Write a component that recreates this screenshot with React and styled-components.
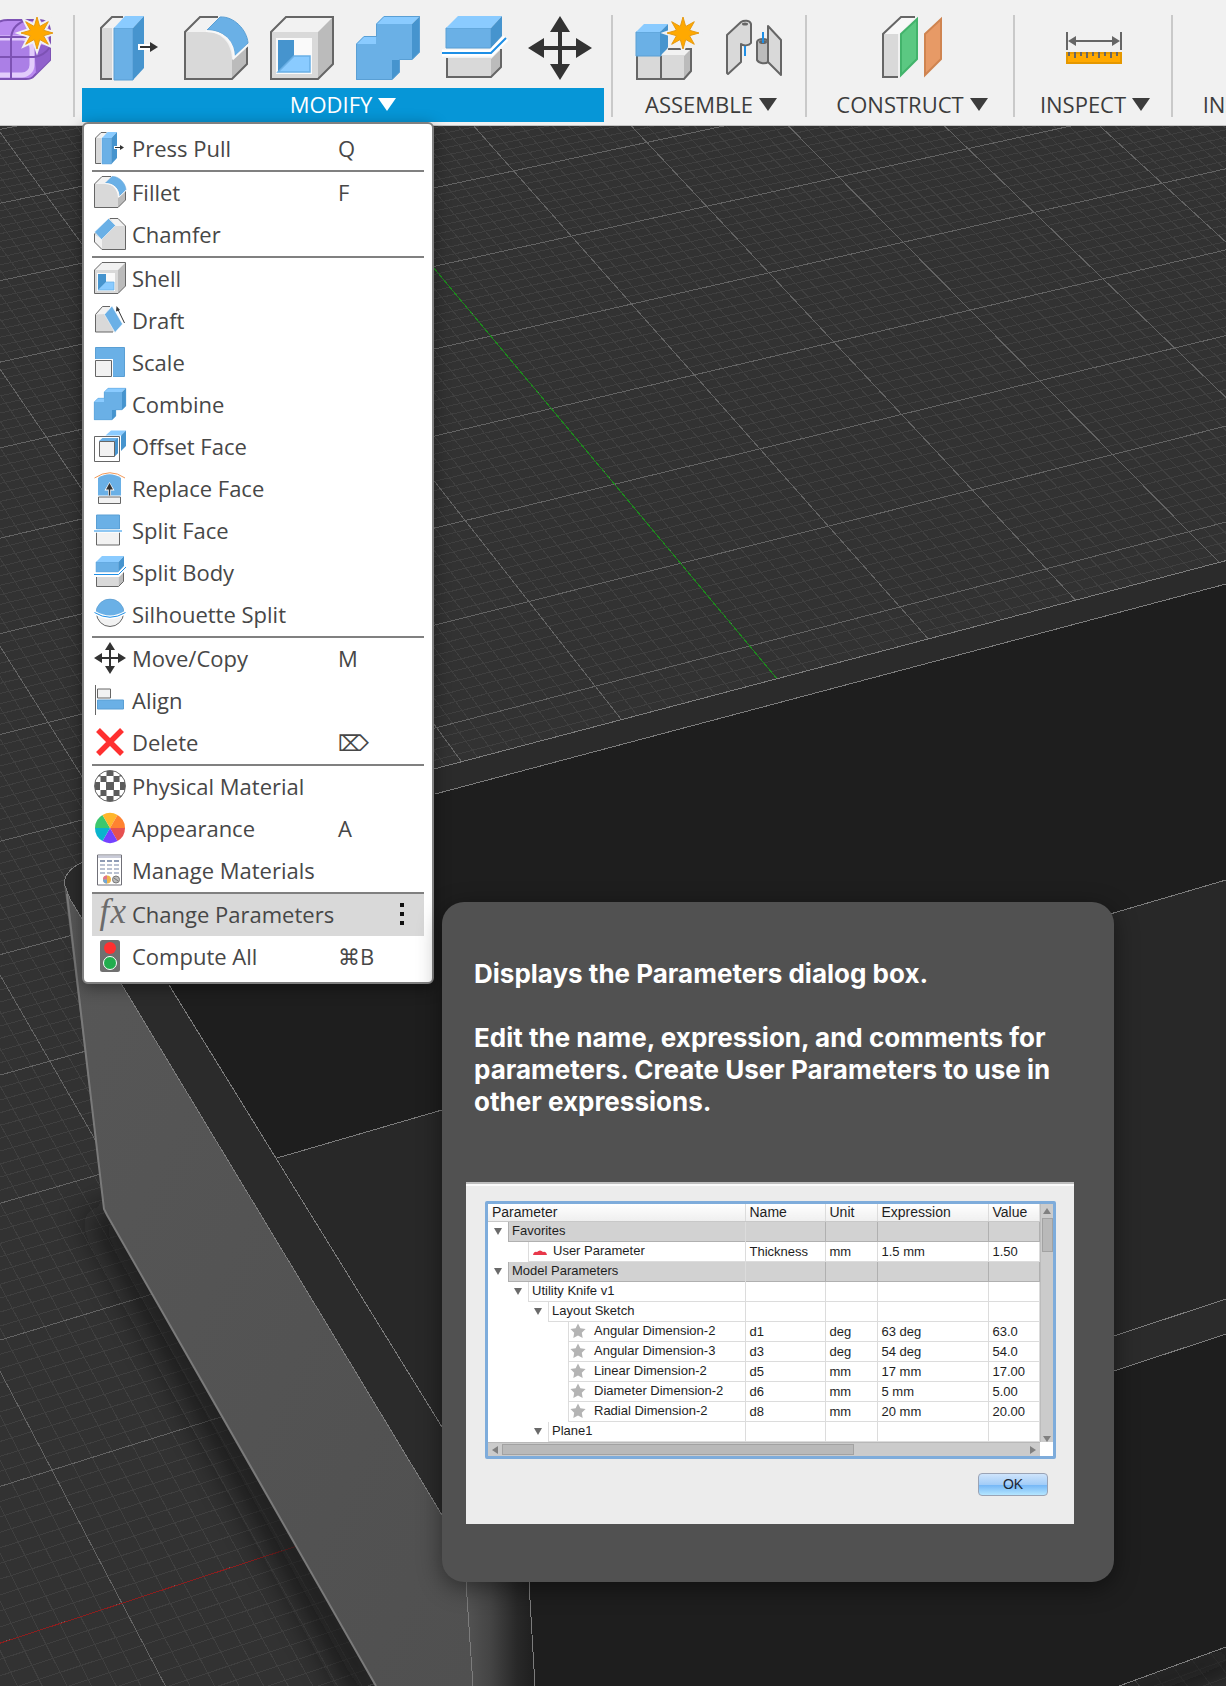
import React from "react";
import styled, { createGlobalStyle } from "styled-components";

const C = {
  blue: "#6ab0e6",
  blueTop: "#8acbff",
  blueSide: "#4694ce",
  blueEdge: "#5a9fd4",
  front: "#d9d9d9",
  top: "#f2f2f2",
  side: "#bbbbbb",
  line: "#666666",
  ink: "#333333",
  orange: "#ffa900",
};

const Global = createGlobalStyle`
  * { box-sizing: border-box; }
  body { margin: 0; background: #323232; }
  button { font: inherit; color: inherit; border: 0; margin: 0; padding: 0; background: none; cursor: pointer; }
`;

const Page = styled.div`
  min-height: 100vh;
  display: flex;
  flex-direction: column;
  overflow: hidden;
  font-family: "Open Sans", "Noto Sans", "DejaVu Sans", sans-serif;
  color: #3c3c3c;
`;

/* ---------- toolbar ---------- */

const Toolbar = styled.header`
  position: relative;
  z-index: 1;
  display: flex;
  height: 126px;
  background: #f1f1f1;
  border-bottom: 1px solid #c4c4c4;
`;

const Divider = styled.div`
  flex: none;
  width: 2px;
  height: 102px;
  margin: 15px 7px 0;
  background: #c9c9c9;
`;

const Group = styled.section`
  position: relative;
  flex: none;
  display: flex;
  flex-direction: column;
  gap: 8px;
  width: ${(p) => p.$width};
  height: 122px;
  padding-top: 16px;
`;

const Tools = styled.div`
  display: flex;
  justify-content: ${(p) => p.$align || "center"};
  gap: 22px;
  padding: 0 12px 0 16px;
`;

const ToolButton = styled.button`
  flex: none;
  width: 64px;
  height: 64px;
`;

const GroupLabel = styled.button`
  display: flex;
  align-items: center;
  justify-content: center;
  gap: 6px;
  height: 34px;
  width: 100%;
  padding: ${(p) => (p.$active ? "0 0 2px" : "0 12px 2px 16px")};
  font-size: 22px;
  line-height: 32px;
  background: ${(p) => (p.$active ? "#0696d7" : "transparent")};
  color: ${(p) => (p.$active ? "#ffffff" : "#3c3c3c")};
`;

const Caret = styled.span`
  border: 9px solid transparent;
  border-top: 13px solid currentColor;
  border-bottom: 0;
`;

/* ---------- menu ---------- */

const Popover = styled.div`
  position: absolute;
  top: 100%;
  left: 0;
  display: flex;
  align-items: flex-start;
  gap: 8px;
  width: max-content;
`;

const Menu = styled.ul`
  list-style: none;
  margin: 0;
  width: 352px;
  padding: 4px 8px;
  background: #ffffff;
  border: 2px solid #808080;
  border-radius: 6px;
  box-shadow: 0 4px 16px rgba(0, 0, 0, 0.4);
`;

const MenuRule = styled.li`
  height: 2px;
  background: #808080;
`;

const MenuItem = styled.button`
  display: flex;
  align-items: center;
  width: 100%;
  height: 42px;
  padding: 0 20px 2px 2px;
  font-size: 22px;
  line-height: 40px;
  text-align: left;
  color: #474747;
  background: ${(p) => (p.$active ? "#d9d9d9" : "transparent")};
`;

const ItemIcon = styled.span`
  flex: none;
  display: flex;
  width: 38px;
  height: 32px;
`;

const ItemName = styled.span`
  flex: none;
  min-width: 206px;
  white-space: nowrap;
`;

const Shortcut = styled.kbd`
  font-family: "Open Sans", "DejaVu Sans", sans-serif;
`;

const Dots = styled.span`
  display: flex;
  flex-direction: column;
  gap: 5px;
  margin-left: auto;
  &::before,
  &::after,
  & > i {
    content: "";
    width: 4px;
    height: 4px;
    background: #111;
  }
`;

/* ---------- tooltip ---------- */

const Tooltip = styled.aside`
  width: 672px;
  margin-top: 780px;
  padding: 56px 40px 58px 24px;
  border-radius: 22px;
  background: #515151;
  box-shadow: 0 6px 24px rgba(0, 0, 0, 0.45);
`;

const TipText = styled.p`
  margin: 0 0 ${(p) => p.$gap}px;
  padding: 0 8px;
  font-family: Inter, sans-serif;
  font-weight: 700;
  font-size: 26px;
  line-height: 32px;
  color: #ffffff;
`;

const DialogPreview = styled.div`
  display: flex;
  flex-direction: column;
  height: 342px;
  padding: 17px 18px 0 19px;
  border-top: 2px solid #bdbdbd;
  background: #ececec;
  box-shadow: inset 0 2px 0 #fbfbfb;
  font-family: "Liberation Sans", Arial, sans-serif;
  font-size: 13px;
  color: #1e1e1e;
`;

const TableFrame = styled.div`
  display: grid;
  grid-template-columns: 1fr 13px;
  background: #ffffff;
  border: 3px solid #7eacdb;
  border-radius: 2px;
`;

const ParamTable = styled.table`
  width: 100%;
  table-layout: fixed;
  border-collapse: collapse;
`;

const HeadCell = styled.th`
  width: ${(p) => p.$width};
  height: 17px;
  padding: 0 0 0 4px;
  font-size: 14px;
  font-weight: 400;
  line-height: 16px;
  text-align: left;
  background: linear-gradient(#ffffff, #efefef);
  border-right: 1px solid #dcdcdc;
  border-bottom: 1px solid #c8c8c8;
`;

const Cell = styled.td`
  height: 20px;
  padding: 0 0 0 4px;
  line-height: 18px;
  white-space: nowrap;
  background: ${(p) => (p.$section ? "#d2d2d2" : "#ffffff")};
  border-right: 1px solid ${(p) => (p.$section ? "#b0b0b0" : "#dcdcdc")};
  border-bottom: 1px solid ${(p) => (p.$section ? "#b0b0b0" : "#dcdcdc")};
`;

const TreeCell = styled(Cell)`
  padding: 0 0 0 ${(p) => p.$level * 20}px;
  background: #ffffff;
  border-bottom: 0;
`;

const TreeRow = styled.div`
  display: flex;
  align-items: center;
  height: 20px;
`;

const Twist = styled.span`
  flex: none;
  width: 20px;
  padding-left: 6px;
  &::before {
    content: "";
    display: block;
    width: 0;
    border: 4px solid transparent;
    border-top: 7px solid #6a6a6a;
    border-bottom: 0;
    visibility: ${(p) => (p.$open ? "visible" : "hidden")};
  }
`;

const TreeName = styled.span`
  flex: 1;
  display: flex;
  align-items: center;
  gap: ${(p) => (p.$star ? 8 : 5)}px;
  height: 20px;
  padding-left: ${(p) => (p.$star ? 1 : 3)}px;
  background: ${(p) => (p.$section ? "#d2d2d2" : "#ffffff")};
  border-left: 1px solid ${(p) => (p.$section ? "#b0b0b0" : "#dcdcdc")};
  border-bottom: 1px solid ${(p) => (p.$section ? "#b0b0b0" : "#dcdcdc")};
`;

const VScroll = styled.div`
  display: flex;
  flex-direction: column;
  align-items: center;
  justify-content: space-between;
  background: #cbcbcb;
  border-left: 1px solid #bcbcbc;
`;

const HScroll = styled.div`
  display: flex;
  align-items: center;
  gap: 4px;
  height: 14px;
  padding: 0 4px;
  background: #cbcbcb;
  border-top: 1px solid #b8b8b8;
`;

const Thumb = styled.span`
  background: #b9b9b9;
  border: 1px solid #a2a2a2;
  width: ${(p) => p.$w};
  height: ${(p) => p.$h};
`;

const ScrollArrow = styled.span`
  width: 0;
  height: 0;
  border: 4px solid transparent;
  border-${(p) => p.$side}: 6px solid #808080;
  border-${(p) => p.$far}: 0;
`;

const ScrollTop = styled.div`
  display: flex;
  flex-direction: column;
  align-items: center;
  gap: 4px;
  padding-top: 4px;
`;

const Spacer = styled.span`
  flex: 1;
`;

const OkButton = styled.button`
  align-self: flex-end;
  width: 70px;
  height: 23px;
  margin: 14px 8px 0 0;
  padding-bottom: 2px;
  font-size: 14px;
  line-height: 18px;
  color: #1c2733;
  border: 1px solid #9aa3b5;
  border-radius: 4px;
  background: linear-gradient(#cfe4fb 0%, #a3cdf8 50%, #74b6f6 52%, #b5e6ff 100%);
`;

/* ---------- viewport ---------- */

const Viewport = styled.main`
  position: relative;
  flex: 1;
  min-height: 1560px;
  background: #323232;
`;

const Scene = styled.svg`
  position: absolute;
  inset: 0;
  width: 100%;
  height: 100%;
`;

/* Ground plane in perspective: u runs along the red axis, v along the green one. */
const project = (u, v) => {
  const w = 1 - 0.02037 * v + 0.01188 * u;
  return [
    (377.1 + 142.6 * u + 46.83 * v) / w,
    (200.1 - 27.15 * u + 61.17 * v) / w,
  ].map((n) => Math.round(n * 10) / 10);
};

const segment = (a, b) => `M${project(...a)}L${project(...b)}`;

const gridPaths = () => {
  let minor = "";
  let major = "";
  for (let i = -120; i <= 140; i += 1) {
    const d = segment([i / 10, -6], [i / 10, 22]);
    if (i % 10) minor += d;
    else major += d;
  }
  for (let i = -60; i <= 220; i += 1) {
    const d = segment([-12, i / 10], [14, i / 10]);
    if (i % 10) minor += d;
    else major += d;
  }
  return { minor, major };
};

const grid = gridPaths();

function SceneDrawing() {
  return (
    <Scene viewBox="0 126 1226 1560" preserveAspectRatio="xMinYMin slice" aria-hidden="true">
      <defs>
        <filter id="soft" x="-20%" y="-20%" width="140%" height="140%">
          <feGaussianBlur stdDeviation="16" />
        </filter>
        <linearGradient id="corner" gradientUnits="userSpaceOnUse" x1="466" y1="0" x2="534" y2="0">
          <stop offset="0" stopColor="#535353" />
          <stop offset="0.35" stopColor="#454545" />
          <stop offset="0.75" stopColor="#282828" />
          <stop offset="1" stopColor="#1f1f1f" />
        </linearGradient>
        <linearGradient id="wall" x1="0" y1="0" x2="1" y2="1">
          <stop offset="0" stopColor="#575757" />
          <stop offset="1" stopColor="#505050" />
        </linearGradient>
      </defs>
      <g fill="none" shapeRendering="crispEdges">
        <path d={grid.minor} stroke="#3f3f3f" />
        <path d={grid.major} stroke="#636363" />
        <path d={segment([0, -6], [0, 12])} stroke="#1c8a1c" />
        <path d={segment([-12, 12], [0, 12])} stroke="#8a1f1f" />
      </g>
      <path d="M104 1209L376 1700M1110 1700L1240 1650" stroke="#161616" strokeWidth="40" opacity=".75" filter="url(#soft)" />
      <path d="M1226 560.6L435 768.7L86 861Q66 868 64 883L67 894L104 1209L107 1215L376 1686H1119L1226 1647Z" fill="#1e1e1e" />
      <path d="M1226 560.6L435 768.7L86 861Q66 868 64 883L70 899L122 985L442 1515L560 1560L1114 1371L1226 1334V1299L1114 1336L560 1500L442 1427L169 985L140 872L435 794L1226 584Z" fill="#2b2b2b" />
      <path d="M277 1158L442 1110L1226 880V1299L500 1540L442 1427Z" fill="#282828" />
      <path d="M64 883L70 899L122 985L442 1515L466 1582L473 1686H376L107 1215L104 1209Z" fill="url(#wall)" />
      <path d="M442 1515L466 1582L473 1686H535L529 1582L500 1500Z" fill="url(#corner)" />
      <g fill="none" stroke="#7c7c7c" shapeRendering="crispEdges">
        <path d="M1226 560.6L435 768.7L86 861Q66 868 64 883L70 899L122 985L442 1515" />
        <path d="M1226 584L435 794M169 985L442 1427M277 1158L442 1110L1226 880" />
        <path d="M1114 1336L1226 1299M1114 1371L1226 1334M1119 1686L1226 1647" />
        <path d="M466 1582L473 1686M529 1582L535 1686" />
      </g>
      <path d="M67 894L104 1209L107 1215L376 1686" fill="none" stroke="#7a7a7a" strokeWidth="2" />
    </Scene>
  );
}

/* ---------- icons ---------- */

const IconSvg = styled.svg`
  display: block;
  overflow: visible;
`;

const Icon = ({ children, size = 64 }) => (
  <IconSvg width={size} height={size} viewBox="0 0 64 64" fill="none" aria-hidden="true">
    {children}
  </IconSvg>
);

const starPath = (cx, cy, outer, inner, points) => {
  let d = "";
  for (let i = 0; i < points * 2; i += 1) {
    const r = i % 2 ? inner : outer;
    const a = (Math.PI * i) / points - Math.PI / 2;
    d += `${i ? "L" : "M"}${(cx + r * Math.cos(a)).toFixed(1)} ${(cy + r * Math.sin(a)).toFixed(1)}`;
  }
  return `${d}Z`;
};

const Spark = ({ cx, cy }) => (
  <>
    <path d={starPath(cx, cy, 18, 9, 8)} fill="#f1f1f1" stroke="#f1f1f1" strokeWidth="3" />
    <path d={starPath(cx, cy, 16, 7, 8)} fill={C.orange} stroke="#e79a10" strokeWidth="1" />
  </>
);

const PressPull = (p) => (
  <Icon {...p}>
    <path d="M3 12L14 1H26L15 12V63H3Z" fill={C.top} />
    <path d="M3 12H14V63H3Z" fill={C.front} />
    <path d="M14 63H3V12L14 1H25" stroke={C.line} strokeWidth="2" />
    <path d="M16 12H35V64H16Z" fill={C.blue} stroke={C.blueEdge} />
    <path d="M16 12L27 0H46L35 12Z" fill={C.blueTop} />
    <path d="M35 12L46 0V52L35 64Z" fill={C.blueSide} />
    <path d="M40 31H52" stroke="#fff" strokeWidth="6" />
    <path d="M42 31H54" stroke={C.ink} strokeWidth="2" />
    <path d="M52 26L60 31L52 36Z" fill={C.ink} />
  </Icon>
);

const Fillet = (p) => (
  <Icon {...p}>
    <path d="M1 16L16 1H36L24 16Z" fill={C.top} />
    <path d="M48 44L63 30V48L48 63Z" fill={C.side} />
    <path d="M1 63V16H23C38 16 48 28 48 44V63Z" fill={C.front} />
    <path d="M34 1H16L1 16V63H48L63 48V30" stroke={C.line} strokeWidth="2" />
    <path d="M23 14L36 1C50 0 63 14 64 27L51 41C50 25 40 14 23 14Z" fill={C.blue} stroke={C.blueEdge} />
    <path d="M22 15C40 15 50 26 50 42L64 29" stroke="#f8f8f8" strokeWidth="2" />
  </Icon>
);

const Chamfer = (p) => (
  <Icon {...p}>
    <path d="M1 48V32L32 1H48L63 16V63H16Z" fill={C.front} stroke={C.line} strokeWidth="2" />
    <path d="M33 2H47L61 16H43Z" fill={C.top} />
    <path d="M2 34L16 42V61L2 47Z" fill={C.top} />
    <path d="M1 28L29 1L43 15L15 43Z" fill={C.blue} stroke="#fff" />
  </Icon>
);

const Shell = (p) => (
  <Icon {...p}>
    <path d="M1 16L16 1H63L48 16Z" fill={C.top} />
    <path d="M48 16L63 1V48L48 63Z" fill={C.side} />
    <path d="M1 16H48V63H1Z" fill={C.front} />
    <path d="M6 22H42V58H6Z" fill="#fafafa" />
    <path d="M8 24H24V40L8 56Z" fill={C.blueSide} />
    <path d="M24 40H40V56H8Z" fill={C.blueTop} stroke={C.blue} strokeWidth="1.5" />
    <path d="M1 16L16 1H63V48L48 63H1Z" stroke={C.line} strokeWidth="2" />
  </Icon>
);

const Draft = (p) => (
  <Icon {...p}>
    <path d="M3 56V22L17 5H26L40 56Z" fill={C.front} />
    <path d="M3 21L17 5H34L22 20Z" fill={C.top} />
    <path d="M38 56H3V21L17 5H32" stroke={C.line} strokeWidth="2" />
    <path d="M21 21L36 4L57 40L42 57Z" fill={C.blue} stroke="#fff" />
    <path d="M61 38L47 9" stroke={C.ink} strokeWidth="2" />
    <path d="M45 4L52 12L44 15Z" fill={C.ink} />
  </Icon>
);

const Scale = (p) => (
  <Icon {...p}>
    <path d="M3 3H61V61H3Z" fill={C.blue} stroke={C.blueEdge} strokeWidth="2" />
    <path d="M2 26H38V62H2Z" fill="#fff" />
    <path d="M3 29H35V61H3Z" fill={C.top} stroke={C.line} strokeWidth="2" />
  </Icon>
);

const Combine = (p) => (
  <Icon {...p}>
    <path d="M0 28L8 20H36V64H0Z" fill={C.blueTop} />
    <path d="M0 28H36V64H0Z" fill={C.blue} />
    <path d="M36 44H44V56L36 64Z" fill={C.blueSide} />
    <path d="M20 8H56V44H20Z" fill={C.blue} />
    <path d="M20 8L28 0H64L56 8Z" fill={C.blueTop} />
    <path d="M56 8L64 0V36L56 44Z" fill={C.blueSide} />
    <path d="M0.5 28L8 20.5H20.5V8L28 0.5H63.5V36L56 43.5H43.5V56L36 63.5H0.5Z" stroke={C.blueEdge} />
  </Icon>
);

const OffsetFace = (p) => (
  <Icon {...p}>
    <path d="M23 11L34 1H64L54 11Z" fill={C.blueTop} />
    <path d="M54 11L64 1V32L54 42Z" fill={C.blueSide} />
    <path d="M1 13H51V63H1Z" fill="#fff" stroke={C.line} strokeWidth="2" />
    <path d="M10 22L17 16H48V46L41 53Z" fill={C.blue} />
    <path d="M41 22L48 16V46L41 53Z" fill={C.blueSide} />
    <path d="M11 23H41V53H11Z" fill={C.top} stroke={C.line} strokeWidth="2" />
  </Icon>
);

const ReplaceFace = (p) => (
  <Icon {...p}>
    <path d="M1 12Q32-9 62 12" stroke="#f19a5b" strokeWidth="2" />
    <path d="M8 12Q31-3 54 12V47H8Z" fill={C.blue} />
    <path d="M9 50H53V63H9Z" fill={C.top} stroke={C.line} strokeWidth="2" />
    <path d="M31 20L41 37H34V47H28V37H21Z" fill="#fff" />
    <path d="M31 47V30" stroke={C.ink} strokeWidth="3" />
    <path d="M31 22L38 35H24Z" fill={C.ink} />
  </Icon>
);

const SplitFace = (p) => (
  <Icon {...p}>
    <path d="M5 2H51V30H5Z" fill={C.blue} stroke={C.blueEdge} strokeWidth="2" />
    <path d="M5 37V62H51V37" fill={C.top} stroke={C.line} strokeWidth="2" />
    <path d="M0 34H56" stroke="#fff" strokeWidth="6" />
    <path d="M0 34H56" stroke="#1e8fe6" strokeWidth="2" />
  </Icon>
);

const SplitBody = (p) => (
  <Icon {...p}>
    <path d="M4 12H49V32H4Z" fill={C.blue} stroke={C.blueEdge} />
    <path d="M4 12L16 0H60L49 12Z" fill={C.blueTop} />
    <path d="M49 12L60 0V20L49 32Z" fill={C.blueSide} />
    <path d="M5 42H49V61H5Z" fill={C.front} />
    <path d="M49 43L59 33V51L49 61Z" fill={C.side} />
    <path d="M5 42V61H49L59 51V33" stroke={C.line} strokeWidth="2" />
    <path d="M0 37H49L64 22" stroke="#fff" strokeWidth="7" />
    <path d="M0 37H49L64 22" stroke="#1e8fe6" strokeWidth="2" />
  </Icon>
);

const Silhouette = (p) => (
  <Icon {...p}>
    <circle cx="32" cy="30" r="27" fill={C.top} stroke={C.line} strokeWidth="2" />
    <path d="M4 30A28 28 0 0 1 60 30Q32 46 4 30Z" fill={C.blue} stroke={C.blueEdge} />
    <path d="M1 29Q32 48 63 29" stroke="#fff" strokeWidth="7" />
    <path d="M1 29Q32 48 63 29" stroke="#1e8fe6" strokeWidth="2" />
  </Icon>
);

const Move = (p) => (
  <Icon {...p}>
    <path d="M32 12V52M12 32H52" stroke={C.ink} strokeWidth="4" />
    <path d="M32 0L42 16H22ZM32 64L42 48H22ZM0 32L16 22V42ZM64 32L48 22V42Z" fill={C.ink} />
  </Icon>
);

const Align = (p) => (
  <Icon {...p}>
    <path d="M3 2V62" stroke={C.line} strokeWidth="2" />
    <path d="M7 10H33V28H7Z" fill={C.top} stroke={C.line} strokeWidth="2" />
    <path d="M7 32H59V50H7Z" fill={C.blue} stroke={C.blueEdge} strokeWidth="2" />
  </Icon>
);

const Delete = (p) => (
  <Icon {...p}>
    <path d="M8 8L56 56M56 8L8 56" stroke="#ff3030" strokeWidth="11" />
  </Icon>
);

const Physical = (p) => (
  <Icon {...p}>
    <clipPath id="ball">
      <circle cx="32" cy="32" r="31" />
    </clipPath>
    <circle cx="32" cy="32" r="31" fill="#fff" />
    <g clipPath="url(#ball)" fill="#5c5c5c">
      <path d="M25 0H39V12H25ZM13 12H25V24H13ZM39 12H51V24H39ZM24 24H40V40H24ZM2 24H12V40H2ZM52 24H62V40H52ZM13 40H25V52H13ZM39 40H51V52H39ZM25 52H39V64H25ZM4 10H13V13H4ZM51 10H60V13H51ZM4 51H13V54H4ZM51 51H60V54H51Z" />
    </g>
    <circle cx="32" cy="32" r="31" stroke={C.line} strokeWidth="2" />
  </Icon>
);

const wedge = (from, color) => {
  const at = (deg) => {
    const a = (deg * Math.PI) / 180;
    return `${(32 + 30 * Math.cos(a)).toFixed(1)} ${(32 + 30 * Math.sin(a)).toFixed(1)}`;
  };
  return <path key={from} d={`M32 32L${at(from)}A30 30 0 0 1 ${at(from + 60)}Z`} fill={color} />;
};

const Appearance = (p) => (
  <Icon {...p}>
    {[
      [0, "#e65050"],
      [60, "#7442ff"],
      [120, "#0ab4cd"],
      [180, "#3cc86e"],
      [240, "#ffb62c"],
      [300, "#ff8230"],
    ].map(([from, color]) => wedge(from, color))}
  </Icon>
);

const Manage = (p) => (
  <Icon {...p}>
    <path d="M7 2H55V62H7Z" fill="#fff" stroke="#707078" strokeWidth="2" />
    <path d="M8 3H54V8H8Z" fill="#c9cbd8" />
    <path d="M12 14H50" stroke="#8e9bb5" strokeWidth="4" strokeDasharray="10 4" />
    <path d="M12 22H50M12 30H50M12 38H50" stroke="#b9c1d2" strokeWidth="4" strokeDasharray="10 4" />
    <circle cx="26" cy="51" r="8" fill="#f0b44a" />
    <path d="M26 51V43A8 8 0 0 0 18 51Z" fill="#e0748c" />
    <path d="M26 51V59A8 8 0 0 1 18 51Z" fill="#6ea6d8" />
    <circle cx="44" cy="51" r="7" fill="#b9b9b9" stroke="#777" strokeWidth="2" />
    <path d="M40 48L48 54" stroke="#777" strokeWidth="2" />
  </Icon>
);

const FxText = styled.text`
  font: italic 70px "Liberation Serif", serif;
  fill: #6b6b6b;
`;

const Fx = (p) => (
  <Icon {...p}>
    <FxText x="11" y="50">
      f
    </FxText>
    <FxText x="33" y="50">
      x
    </FxText>
  </Icon>
);

const Traffic = (p) => (
  <Icon {...p}>
    <rect x="12" y="0" width="40" height="64" rx="5" fill="#707070" />
    <circle cx="32" cy="16" r="12" fill="#ff3030" />
    <circle cx="32" cy="46" r="13" fill="#22ad4e" stroke="#fff" strokeWidth="2" />
  </Icon>
);

const CreateForm = () => (
  <Icon>
    <path d="M0 20C0 10 8 4 18 4H48C56 4 60 8 60 16V44L44 60Q42 63 36 63H10Q0 63 0 52Z" fill="#b98af0" stroke="#7d52b4" strokeWidth="2" />
    <path d="M44 28L60 30V44L46 58Z" fill="#9061cc" />
    <rect x="-6" y="22" width="48" height="37" rx="10" fill="#ab7fe6" stroke="#e2ccfb" strokeWidth="5" />
    <path d="M21 63V24Q21 10 34 5M0 41H44Q54 40 60 31M0 21H46" stroke="#7d52b4" strokeWidth="2" />
    <Spark cx={47} cy={17} />
  </Icon>
);

const NewComponent = () => (
  <Icon>
    <path d="M25 40L32 33H55L48 40Z" fill={C.top} />
    <path d="M48 40L55 33V55L48 63Z" fill={C.side} />
    <path d="M1 39H48V63H1Z" fill={C.front} />
    <path d="M25 40V63M1 39V63H48L55 55V33H32" stroke={C.line} strokeWidth="2" />
    <path d="M0 16H25V40H0Z" fill={C.blue} stroke={C.blueEdge} />
    <path d="M0 16L8 8H32L24 16Z" fill={C.blueTop} />
    <path d="M24 16L32 8V32L24 40Z" fill={C.blueSide} />
    <Spark cx={47} cy={17} />
  </Icon>
);

const Joint = () => (
  <Icon>
    <path d="M5 19L19 6V46L5 58Z" fill={C.front} />
    <path d="M19 6C20 4 29 4 29 8V26C27 30 21 30 19 28Z" fill={C.front} />
    <path d="M5 57V19L19 6C22 4 28 4 29 8V27C27 30 21 30 19 28V46L6 58Z" stroke={C.line} strokeWidth="2" strokeLinejoin="round" />
    <ellipse cx="23" cy="8" rx="3" ry="1.5" fill={C.line} />
    <path d="M23 30V40" stroke="#1e8fe6" strokeWidth="2" />
    <path d="M46 10L59 24V59L46 46Z" fill={C.front} stroke={C.line} strokeWidth="2" strokeLinejoin="round" />
    <path d="M35 26C36 22 46 22 46 26V46C44 48 37 48 35 44Z" fill={C.side} stroke={C.line} strokeWidth="2" />
    <ellipse cx="41" cy="26" rx="4" ry="2" fill={C.line} />
    <path d="M41 16V27" stroke="#1e8fe6" strokeWidth="2" />
  </Icon>
);

const OffsetPlane = () => (
  <Icon>
    <path d="M3 18L21 1H36L19 18Z" fill="#f8f8f8" />
    <path d="M3 18H18V61H3Z" fill={C.front} />
    <path d="M18 61H3V18L21 1H35" stroke={C.line} strokeWidth="2" />
    <path d="M21 18L37 3V43L21 59Z" fill="#5bc882" stroke="#42b36b" strokeWidth="2" />
    <path d="M45 18L61 3V43L45 59Z" fill="#e79a66" stroke="#cf8450" strokeWidth="2" />
  </Icon>
);

const Measure = () => (
  <Icon>
    <path d="M4 16V34M58 16V34M8 25H54" stroke={C.line} strokeWidth="2" />
    <path d="M5 25L13 20V30ZM57 25L49 20V30Z" fill={C.line} />
    <path d="M4 37H58V47H4Z" fill={C.orange} stroke="#e59800" strokeWidth="2" />
    <path d="M6 36V40M12 36V42M18 36V40M24 36V42M30 36V40M36 36V42M42 36V40M48 36V42M54 36V40" stroke={C.line} strokeWidth="2" />
  </Icon>
);

const InsertImage = () => (
  <Icon>
    <path d="M9 3H63V59H9Z" fill={C.blueTop} stroke="#3d8dcb" strokeWidth="2" />
    <path d="M9 40L32 14L63 50V60H9Z" fill="#3d8dcb" />
  </Icon>
);

/* ---------- content ---------- */

const modifyTools = [
  ["Press Pull", PressPull],
  ["Fillet", Fillet],
  ["Shell", Shell],
  ["Combine", Combine],
  ["Split Body", SplitBody],
  ["Move/Copy", Move],
];

const groups = [
  { name: "ASSEMBLE", width: "178px", tools: [["New Component", NewComponent], ["Joint", Joint]] },
  { name: "CONSTRUCT", width: "192px", tools: [["Offset Plane", OffsetPlane]] },
  { name: "INSPECT", width: "142px", tools: [["Measure", Measure]] },
  { name: "INSERT", width: "138px", tools: [["Insert Image", InsertImage]] },
];

const menu = [
  [["Press Pull", PressPull, "Q"]],
  [["Fillet", Fillet, "F"], ["Chamfer", Chamfer]],
  [
    ["Shell", Shell],
    ["Draft", Draft],
    ["Scale", Scale],
    ["Combine", Combine],
    ["Offset Face", OffsetFace],
    ["Replace Face", ReplaceFace],
    ["Split Face", SplitFace],
    ["Split Body", SplitBody],
    ["Silhouette Split", Silhouette],
  ],
  [["Move/Copy", Move, "M"], ["Align", Align], ["Delete", Delete, "⌦"]],
  [["Physical Material", Physical], ["Appearance", Appearance, "A"], ["Manage Materials", Manage]],
  [["Change Parameters", Fx, null, true], ["Compute All", Traffic, "⌘B"]],
];

const rows = [
  { level: 0, open: true, section: true, name: "Favorites" },
  { level: 1, mark: "red", name: "User Parameter", cells: ["Thickness", "mm", "1.5 mm", "1.50"] },
  { level: 0, open: true, section: true, name: "Model Parameters" },
  { level: 1, open: true, name: "Utility Knife v1" },
  { level: 2, open: true, name: "Layout Sketch" },
  { level: 3, mark: "star", name: "Angular Dimension-2", cells: ["d1", "deg", "63 deg", "63.0"] },
  { level: 3, mark: "star", name: "Angular Dimension-3", cells: ["d3", "deg", "54 deg", "54.0"] },
  { level: 3, mark: "star", name: "Linear Dimension-2", cells: ["d5", "mm", "17 mm", "17.00"] },
  { level: 3, mark: "star", name: "Diameter Dimension-2", cells: ["d6", "mm", "5 mm", "5.00"] },
  { level: 3, mark: "star", name: "Radial Dimension-2", cells: ["d8", "mm", "20 mm", "20.00"] },
  { level: 2, open: true, name: "Plane1" },
];

const Mark = ({ kind }) => (
  <svg width="16" height="16" viewBox="0 0 16 16" aria-hidden="true">
    {kind === "star" ? (
      <path d={starPath(8, 8.5, 8, 4, 5)} fill="#b4b4b4" />
    ) : (
      <path d="M1 12Q2 8 5 9Q8 6 11 9Q14 8 15 12Z" fill="#e8384a" />
    )}
  </svg>
);

function ParameterTable() {
  return (
    <DialogPreview>
      <TableFrame>
        <ParamTable>
          <thead>
            <tr>
              <HeadCell $width="257px">Parameter</HeadCell>
              <HeadCell $width="80px">Name</HeadCell>
              <HeadCell $width="52px">Unit</HeadCell>
              <HeadCell $width="111px">Expression</HeadCell>
              <HeadCell>Value</HeadCell>
            </tr>
          </thead>
          <tbody>
            {rows.map((r) => (
              <tr key={r.name}>
                <TreeCell $level={r.level}>
                  <TreeRow>
                    <Twist $open={r.open} />
                    <TreeName $section={r.section} $star={r.mark === "star"}>
                      {r.mark && <Mark kind={r.mark} />}
                      {r.name}
                    </TreeName>
                  </TreeRow>
                </TreeCell>
                {(r.cells || ["", "", "", ""]).map((text, i) => (
                  <Cell key={i} $section={r.section}>
                    {text}
                  </Cell>
                ))}
              </tr>
            ))}
          </tbody>
        </ParamTable>
        <VScroll>
          <ScrollTop>
            <ScrollArrow $side="bottom" $far="top" />
            <Thumb $w="11px" $h="34px" />
          </ScrollTop>
          <ScrollArrow $side="top" $far="bottom" />
        </VScroll>
        <HScroll>
          <ScrollArrow $side="right" $far="left" />
          <Thumb $w="352px" $h="11px" />
          <Spacer />
          <ScrollArrow $side="left" $far="right" />
        </HScroll>
      </TableFrame>
      <OkButton type="button">OK</OkButton>
    </DialogPreview>
  );
}

function ModifyMenu() {
  return (
    <Menu>
      {menu.map((section, s) => (
        <React.Fragment key={s}>
          {s > 0 && <MenuRule role="separator" />}
          {section.map(([name, Glyph, key, active]) => (
            <li key={name}>
              <MenuItem type="button" $active={active}>
                <ItemIcon>
                  <Glyph size={32} />
                </ItemIcon>
                <ItemName>{name}</ItemName>
                {key && <Shortcut>{key}</Shortcut>}
                {active && (
                  <Dots>
                    <i />
                  </Dots>
                )}
              </MenuItem>
            </li>
          ))}
        </React.Fragment>
      ))}
    </Menu>
  );
}

const ToolRow = ({ tools, align }) => (
  <Tools $align={align}>
    {tools.map(([name, Glyph]) => (
      <ToolButton key={name} type="button" aria-label={name}>
        <Glyph />
      </ToolButton>
    ))}
  </Tools>
);

export default function App() {
  return (
    <Page>
      <Global />
      <Toolbar>
        <Group $width="66px">
          <ToolRow tools={[["Create Form", CreateForm]]} align="flex-end" />
        </Group>
        <Divider />
        <Group $width="522px">
          <ToolRow tools={modifyTools} />
          <GroupLabel type="button" $active>
            MODIFY <Caret />
          </GroupLabel>
          <Popover>
            <ModifyMenu />
            <Tooltip role="tooltip">
              <TipText $gap={32}>Displays the Parameters dialog box.</TipText>
              <TipText $gap={64}>
                Edit the name, expression, and comments for parameters. Create User Parameters to use in other
                expressions.
              </TipText>
              <ParameterTable />
            </Tooltip>
          </Popover>
        </Group>
        {groups.map((g) => (
          <React.Fragment key={g.name}>
            <Divider />
            <Group $width={g.width}>
              <ToolRow tools={g.tools} />
              <GroupLabel type="button">
                {g.name} <Caret />
              </GroupLabel>
            </Group>
          </React.Fragment>
        ))}
      </Toolbar>
      <Viewport>
        <SceneDrawing />
      </Viewport>
    </Page>
  );
}
